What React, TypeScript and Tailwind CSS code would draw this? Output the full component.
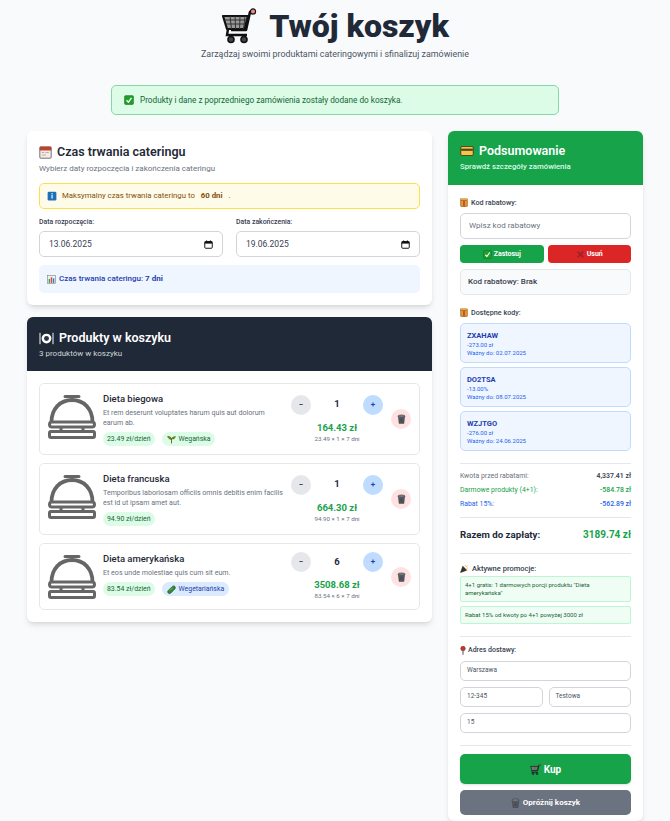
import React from 'react';

type IconProps = { className?: string };

const CartEmoji: React.FC<IconProps> = ({ className }) => (
  <svg viewBox="0 0 36 36" className={className}>
    <path d="M34 3 29 4 25 22H10" fill="none" stroke="#111" strokeWidth="2.6" strokeLinejoin="round" />
    <circle cx="32" cy="3.5" r="2.6" fill="#f28b82" stroke="#111" strokeWidth="1.2" />
    <path d="M2 8h25l-3.5 13H6z" fill="#9a9a9a" stroke="#111" strokeWidth="2.2" strokeLinejoin="round" />
    <path d="M4 12h21M5 16h19M9 8l1.5 13M14 8l.6 13M19 8l-.4 13M24 8l-1.4 13" stroke="#333" strokeWidth="1" />
    <path d="M7 21 6 27h20" fill="none" stroke="#111" strokeWidth="2.4" />
    <circle cx="10" cy="31.5" r="3" fill="#444" stroke="#111" strokeWidth="1.6" />
    <circle cx="23" cy="31.5" r="3" fill="#444" stroke="#111" strokeWidth="1.6" />
  </svg>
);

const CheckEmoji: React.FC<IconProps> = ({ className }) => (
  <svg viewBox="0 0 16 16" className={className}>
    <rect x="1" y="1" width="14" height="14" rx="1.5" fill="#22a02c" stroke="#166f1e" />
    <path d="M4 8.5 7 11.5 12 4.5" fill="none" stroke="#fff" strokeWidth="2" />
  </svg>
);

const CalendarEmoji: React.FC<IconProps> = ({ className }) => (
  <svg viewBox="0 0 16 16" className={className}>
    <rect x="1" y="1" width="14" height="14" rx="1" fill="#f2ece8" stroke="#555" />
    <rect x="1" y="1" width="14" height="4.5" fill="#c2402e" />
    <path d="M3.5 8h3M8 8h4M3.5 11h5" stroke="#c9a79c" strokeWidth="1.3" />
  </svg>
);

const InfoEmoji: React.FC<IconProps> = ({ className }) => (
  <svg viewBox="0 0 16 16" className={className}>
    <rect x="1" y="1" width="14" height="14" rx="2" fill="#1c6fb8" />
    <rect x="7" y="3.5" width="2.2" height="2" fill="#dbe9f6" />
    <rect x="7" y="6.5" width="2.2" height="5.5" fill="#dbe9f6" />
  </svg>
);

const ChartEmoji: React.FC<IconProps> = ({ className }) => (
  <svg viewBox="0 0 16 16" className={className}>
    <rect x="1" y="1" width="14" height="14" fill="#eef1f2" stroke="#777" />
    <rect x="3" y="7" width="2.6" height="7" fill="#3f9c4a" />
    <rect x="6.7" y="4" width="2.6" height="10" fill="#d2503e" />
    <rect x="10.4" y="6" width="2.6" height="8" fill="#2f7fc4" />
  </svg>
);

const PlateEmoji: React.FC<IconProps> = ({ className }) => (
  <svg viewBox="0 0 18 16" className={className}>
    <path d="M1 1v14M17 1v14" stroke="#fff" strokeWidth="1.2" />
    <circle cx="9" cy="8" r="6" fill="#fff" />
    <circle cx="9" cy="8" r="3" fill="#2a3442" />
  </svg>
);

const CardEmoji: React.FC<IconProps> = ({ className }) => (
  <svg viewBox="0 0 16 12" className={className}>
    <rect x="0.5" y="0.5" width="15" height="11" rx="1.6" fill="#f3c64a" stroke="#3b2f14" />
    <rect x="1" y="3.2" width="14" height="2.6" fill="#5a4414" />
  </svg>
);

const GiftEmoji: React.FC<IconProps> = ({ className }) => (
  <svg viewBox="0 0 14 16" className={className}>
    <rect x="1" y="4" width="12" height="11" rx="1" fill="#e39a2d" stroke="#8a4f12" />
    <rect x="5.6" y="4" width="2.8" height="11" fill="#c9402c" />
    <rect x="1" y="1.5" width="12" height="3" fill="#f0b040" stroke="#8a4f12" strokeWidth="0.8" />
  </svg>
);

const CrossEmoji: React.FC<IconProps> = ({ className }) => (
  <svg viewBox="0 0 16 16" className={className}>
    <path d="M3 3l10 10M13 3 3 13" stroke="#a3212a" strokeWidth="3.4" />
  </svg>
);

const TrashEmoji: React.FC<IconProps> = ({ className }) => (
  <svg viewBox="0 0 14 16" className={className}>
    <path d="M2 4h10l-1.2 11H3.2z" fill="#5c5f66" stroke="#33363b" strokeWidth="0.8" />
    <ellipse cx="7" cy="3.4" rx="5.8" ry="2" fill="#7a7d84" stroke="#33363b" strokeWidth="0.8" />
    <path d="M5 7v6M7 7v6M9 7v6" stroke="#393b40" strokeWidth="0.8" />
  </svg>
);

const HerbEmoji: React.FC<IconProps> = ({ className }) => (
  <svg viewBox="0 0 16 16" className={className}>
    <path d="M8 15V7" stroke="#6b5a1e" strokeWidth="1.6" />
    <path d="M8 8C5 8 2 6 1 2.5 5 2 8 4 8 8zM8 7c1-3 3.500-4.500 7-4.500C14.500 6 12 8 8 7z" fill="#6f8f1d" stroke="#3d5210" strokeWidth="0.7" />
  </svg>
);

const CucumberEmoji: React.FC<IconProps> = ({ className }) => (
  <svg viewBox="0 0 16 16" className={className}>
    <path d="M2 14c-1.500-1.500-1-3 .5-4.500L9 3c1.500-1.500 3.500-2 5-.5s1 3.500-.5 5L7 14c-1.500 1.500-3.500 1.500-5 0z" fill="#2f8a36" stroke="#14501a" />
    <path d="M5 10l5-5" stroke="#8fd08f" strokeWidth="1.2" />
  </svg>
);

const PartyEmoji: React.FC<IconProps> = ({ className }) => (
  <svg viewBox="0 0 16 16" className={className}>
    <path d="M1 15 5 4l7 7z" fill="#3b3324" stroke="#1d180f" />
    <path d="M9 2l1 2M13 3l-2 2M14 7l-2 .5" stroke="#e0a92e" strokeWidth="1.6" />
    <circle cx="12" cy="11" r="1.2" fill="#e0a92e" />
  </svg>
);

const PinEmoji: React.FC<IconProps> = ({ className }) => (
  <svg viewBox="0 0 10 16" className={className}>
    <circle cx="5" cy="4.500" r="4" fill="#c8372d" stroke="#7e1d17" />
    <path d="M5 8v7.500" stroke="#555" strokeWidth="1.8" />
  </svg>
);

const DateIcon: React.FC = () => (
  <svg viewBox="0 0 12 12" className="h-[9px] w-[9px] shrink-0">
    <rect x="1" y="2" width="10" height="9" rx="1.2" fill="none" stroke="#111" strokeWidth="1.3" />
    <rect x="1" y="2" width="10" height="2.800" fill="#111" />
    <path d="M3.500 0.500v2M8.500 0.500v2" stroke="#111" strokeWidth="1.2" />
  </svg>
);

const BellIcon: React.FC = () => (
  <svg viewBox="0 0 48 44" className="mt-[3px] h-[44px] w-[48px] shrink-0 self-start" fill="none" stroke="#666666">
    <path d="M17 1.500h14M24 1.500v4" strokeWidth="3" strokeLinecap="round" />
    <path d="M3.500 27C3.500 14 12 5 24 5s20.500 9 20.500 22" strokeWidth="3.800" />
    <rect x="1.500" y="27" width="45" height="5" rx="2.500" strokeWidth="3" />
    <path d="M13 32v5M35 32v5" strokeWidth="3" />
    <rect x="1.500" y="36.500" width="45" height="6" rx="1.500" strokeWidth="3" />
  </svg>
);

const ITEMS = [
  {
    name: 'Dieta biegowa',
    desc: 'Et rem deserunt voluptates harum quis aut dolorum earum ab.',
    descWidth: 'max-w-[168px]',
    perDay: '23.49 zł/dzień',
    qty: 1,
    total: '164.43 zł',
    calc: '23.49 × 1 × 7 dni',
    tag: 'vegan',
  },
  {
    name: 'Dieta francuska',
    desc: 'Temporibus laboriosam officiis omnis debitis enim facilis est id ut ipsam amet aut.',
    descWidth: 'max-w-[185px]',
    perDay: '94.90 zł/dzień',
    qty: 1,
    total: '664.30 zł',
    calc: '94.90 × 1 × 7 dni',
    tag: '',
  },
  {
    name: 'Dieta amerykańska',
    desc: 'Et eos unde molestiae quis cum sit eum.',
    descWidth: 'max-w-[185px]',
    perDay: '83.54 zł/dzień',
    qty: 6,
    total: '3508.68 zł',
    calc: '83.54 × 6 × 7 dni',
    tag: 'vege',
  },
];

const CODES = [
  { code: 'ZXAHAW', value: '-273.00 zł', until: 'Ważny do: 02.07.2025' },
  { code: 'DO2TSA', value: '-13.00%', until: 'Ważny do: 08.07.2025' },
  { code: 'WZJTGO', value: '-276.00 zł', until: 'Ważny do: 24.06.2025' },
];

const App: React.FC = () => {
  return (
    <div className="min-h-screen bg-[#f8fafc] px-[27px] pt-[8px] font-['Roboto',sans-serif] text-[#1f2937]">
      <div className="text-center">
        <h1 className="flex items-center justify-center gap-[12px] text-[32px] leading-[36px] font-black text-[#1f2937]">
          <CartEmoji className="h-[36px] w-[36px]" />
          Twój koszyk
        </h1>
        <p className="mt-[3px] text-[8.900px] leading-[14px] text-[#4b5563]">
          Zarządzaj swoimi produktami cateringowymi i sfinalizuj zamówienie
        </p>
      </div>

      <div className="mx-auto mt-[24px] flex h-[30px] w-[448px] items-center gap-[6px] rounded-[5px] border border-[#86d9a4] bg-[#dcfce7] px-[12px] text-[8.200px] text-[#166534]">
        <CheckEmoji className="h-[10px] w-[10px]" />
        Produkty i dane z poprzedniego zamówienia zostały dodane do koszyka.
      </div>

      <div className="mt-[16px] flex items-start gap-[16px]">
        <div className="flex w-[405px] shrink-0 flex-col gap-[12px]">
          <section className="rounded-[6px] bg-white p-[12px] shadow-md">
            <h2 className="flex items-center gap-[5px] text-[12.500px] leading-[18px] font-semibold text-[#1f2937]">
              <CalendarEmoji className="h-[13px] w-[13px]" />
              Czas trwania cateringu
            </h2>
            <p className="mt-[2px] text-[8px] leading-[12px] text-[#6b7280]">Wybierz daty rozpoczęcia i zakończenia cateringu</p>
            <div className="mt-[8px] flex h-[26px] items-center gap-[4px] rounded-[5px] border border-[#fde047] bg-[#fefce8] px-[7px] text-[7.800px] text-[#854d0e]">
              <InfoEmoji className="mr-[1px] h-[10px] w-[10px]" />
              Maksymalny czas trwania cateringu to
              <span className="font-bold">&nbsp;60 dni&nbsp;</span>
              .
            </div>
            <div className="mt-[8px] grid grid-cols-2 gap-[13px]">
              {['13.06.2025', '19.06.2025'].map((date, idx) => (
                <div key={date}>
                  <div className="text-[6.900px] leading-[11px] font-medium text-[#374151]">{idx === 0 ? 'Data rozpoczęcia:' : 'Data zakończenia:'}</div>
                  <div className="mt-[3px] flex h-[26px] items-center justify-between rounded-[5px] border border-[#d1d5db] bg-white px-[9px] text-[8.500px] text-[#374151]">
                    {date}
                    <DateIcon />
                  </div>
                </div>
              ))}
            </div>
            <div className="mt-[8px] flex h-[28px] items-center gap-[3px] rounded-[5px] bg-[#eff6ff] px-[8px] text-[8px] font-medium text-[#1e40af]">
              <ChartEmoji className="h-[9px] w-[9px]" />
              <span>
                Czas trwania cateringu: <b>7 dni</b>
              </span>
            </div>
          </section>

          <section className="overflow-hidden rounded-[6px] bg-white shadow-md">
            <div className="h-[54px] bg-[#1f2937] px-[12px] pt-[12px] text-white">
              <h2 className="flex items-center gap-[5px] text-[12.500px] leading-[18px] font-semibold">
                <PlateEmoji className="h-[13px] w-[15px]" />
                Produkty w koszyku
              </h2>
              <p className="mt-[1px] text-[8px] leading-[12px] text-[#d1d5db]">3 produktów w koszyku</p>
            </div>
            <div className="flex flex-col gap-[8px] p-[12px]">
              {ITEMS.map((item) => (
                <div key={item.name} className="flex items-center rounded-[5px] border border-[#e5e7eb] bg-white py-[8px] pr-[8px] pl-[8px]">
                  <BellIcon />
                  <div className="ml-[7px] w-[185px] shrink-0 self-start">
                    <div className="text-[9.500px] leading-[14px] font-medium text-[#1f2937]">{item.name}</div>
                    <p className={`mt-[2px] text-[7.100px] leading-[10px] text-[#6b7280] ${item.descWidth}`}>{item.desc}</p>
                    <div className="mt-[4px] flex gap-[7px]">
                      <span className="rounded-full bg-[#dcfce7] px-[4px] py-[2px] text-[6.900px] leading-[10px] text-[#166534]">{item.perDay}</span>
                      {item.tag === 'vegan' && (
                        <span className="flex items-center gap-[3px] rounded-full bg-[#dcfce7] px-[5px] py-[2px] text-[6.900px] leading-[10px] text-[#166534]">
                          <HerbEmoji className="h-[9px] w-[9px]" />
                          Wegańska
                        </span>
                      )}
                      {item.tag === 'vege' && (
                        <span className="flex items-center gap-[3px] rounded-full bg-[#dbeafe] px-[5px] py-[2px] text-[6.900px] leading-[10px] text-[#1e40af]">
                          <CucumberEmoji className="h-[9px] w-[9px]" />
                          Wegetariańska
                        </span>
                      )}
                    </div>
                  </div>
                  <div className="ml-[3px] flex w-[92px] shrink-0 flex-col items-center">
                    <div className="flex w-full items-center justify-between">
                      <button className="flex h-[20px] w-[20px] items-center justify-center rounded-full bg-[#e5e7eb] text-[8px] font-bold text-[#374151]">−</button>
                      <span className="text-[9.500px] font-bold text-[#1f2937]">{item.qty}</span>
                      <button className="flex h-[20px] w-[20px] items-center justify-center rounded-full bg-[#bfdbfe] text-[8px] font-bold text-[#1e40af]">+</button>
                    </div>
                    <div className="mt-[6px] text-[9.500px] leading-[14px] font-bold text-[#16a34a]">{item.total}</div>
                    <div className="text-[6.200px] leading-[9px] text-[#6b7280]">{item.calc}</div>
                  </div>
                  <button className="ml-[8px] flex h-[20px] w-[20px] shrink-0 items-center justify-center rounded-full bg-[#fee2e2]">
                    <TrashEmoji className="h-[10px] w-[9px]" />
                  </button>
                </div>
              ))}
            </div>
          </section>
        </div>

        <aside className="w-[195px] shrink-0 overflow-hidden rounded-[6px] bg-white shadow-md">
          <div className="h-[54px] bg-[#16a34a] px-[12px] pt-[11px] text-white">
            <h2 className="flex items-center gap-[5px] text-[12.500px] leading-[18px] font-semibold">
              <CardEmoji className="h-[10px] w-[14px]" />
              Podsumowanie
            </h2>
            <p className="mt-[1px] text-[7.800px] leading-[12px] font-medium text-[#dcfce7]">Sprawdź szczegóły zamówienia</p>
          </div>

          <div className="px-[12px] pt-[12px]">
            <div className="flex items-center gap-[3px] text-[7.200px] leading-[11px] font-medium text-[#374151]">
              <GiftEmoji className="h-[9px] w-[8px]" />
              Kod rabatowy:
            </div>
            <div className="mt-[5px] flex h-[26px] items-center rounded-[5px] border border-[#d1d5db] px-[8px] text-[8px] text-[#6b7280]">Wpisz kod rabatowy</div>
            <div className="mt-[6px] grid grid-cols-2 gap-[4px]">
              <button className="flex h-[18px] items-center justify-center gap-[2px] rounded-[4px] bg-[#16a34a] text-[7px] font-bold text-white">
                <CheckEmoji className="h-[9px] w-[9px]" />
                Zastosuj
              </button>
              <button className="flex h-[18px] items-center justify-center gap-[2px] rounded-[4px] bg-[#dc2626] text-[7px] font-bold text-white">
                <CrossEmoji className="h-[9px] w-[9px]" />
                Usuń
              </button>
            </div>
            <div className="mt-[6px] flex h-[26px] items-center rounded-[5px] border border-[#e5e7eb] bg-[#f9fafb] px-[7px] text-[8px] font-medium text-[#374151]">Kod rabatowy: Brak</div>

            <div className="mt-[12px] flex items-center gap-[3px] text-[7.200px] leading-[11px] font-medium text-[#374151]">
              <GiftEmoji className="h-[9px] w-[8px]" />
              Dostępne kody:
            </div>
            <div className="mt-[5px] flex flex-col gap-[4px]">
              {CODES.map((c) => (
                <div key={c.code} className="h-[40px] rounded-[5px] border border-[#bfdbfe] bg-[#eff6ff] px-[6px] pt-[6px]">
                  <div className="text-[7.500px] leading-[11px] font-bold text-[#1e40af]">{c.code}</div>
                  <div className="text-[6px] leading-[8px] text-[#2563eb]">{c.value}</div>
                  <div className="text-[6px] leading-[8px] text-[#2563eb]">{c.until}</div>
                </div>
              ))}
            </div>

            <hr className="mt-[12px] border-[#e5e7eb]" />

            <div className="mt-[8px] flex flex-col gap-[6px] text-[6.900px] leading-[8px]">
              <div className="flex justify-between text-[#6b7280]">
                <span>Kwota przed rabatami:</span>
                <span className="font-semibold text-[#374151]">4,337.41 zł</span>
              </div>
              <div className="flex justify-between text-[#16a34a]">
                <span>Darmowe produkty (4+1):</span>
                <span className="font-medium">-584.78 zł</span>
              </div>
              <div className="flex justify-between text-[#2563eb]">
                <span>Rabat 15%:</span>
                <span className="font-medium">-562.89 zł</span>
              </div>
            </div>

            <hr className="mt-[9px] border-[#e5e7eb]" />
            <div className="mt-[9px] flex items-center justify-between leading-[16px] font-bold">
              <span className="text-[9.700px] text-[#1f2937]">Razem do zapłaty:</span>
              <span className="text-[10px] text-[#16a34a]">3189.74 zł</span>
            </div>
            <hr className="mt-[10px] border-[#e5e7eb]" />

            <div className="mt-[9px] flex items-center gap-[3px] text-[7.500px] leading-[11px] font-medium text-[#374151]">
              <PartyEmoji className="h-[9px] w-[9px]" />
              Aktywne promocje:
            </div>
            <div className="mt-[2px] rounded-[2px] border border-[#bbf7d0] bg-[#f0fdf4] px-[4px] py-[4px] text-[6px] leading-[8px] text-[#166534]">4+1 gratis: 1 darmowych porcji produktu "Dieta amerykańska"</div>
            <div className="mt-[4px] rounded-[2px] border border-[#bbf7d0] bg-[#f0fdf4] px-[4px] py-[4px] text-[6px] leading-[8px] text-[#166534]">Rabat 15% od kwoty po 4+1 powyżej 3000 zł</div>

            <hr className="mt-[12px] border-[#e5e7eb]" />

            <div className="mt-[8px] flex items-center gap-[2px] text-[7px] leading-[11px] font-medium text-[#374151]">
              <PinEmoji className="h-[9px] w-[6px]" />
              Adres dostawy:
            </div>
            <div className="mt-[5px] flex h-[20px] items-center rounded-[5px] border border-[#d1d5db] px-[6px] text-[6.500px] text-[#4b5563]">Warszawa</div>
            <div className="mt-[6px] grid grid-cols-2 gap-[6px]">
              <div className="flex h-[20px] items-center rounded-[5px] border border-[#d1d5db] px-[6px] text-[6.500px] text-[#4b5563]">12-345</div>
              <div className="flex h-[20px] items-center rounded-[5px] border border-[#d1d5db] px-[6px] text-[6.500px] text-[#4b5563]">Testowa</div>
            </div>
            <div className="mt-[6px] flex h-[20px] items-center rounded-[5px] border border-[#d1d5db] px-[6px] text-[6.500px] text-[#4b5563]">15</div>

            <hr className="mt-[12px] border-[#e5e7eb]" />

            <button className="mt-[8px] flex h-[30px] w-full items-center justify-center gap-[3px] rounded-[5px] bg-[#16a34a] text-[10px] font-bold text-white shadow-sm">
              <CartEmoji className="h-[11px] w-[11px]" />
              Kup
            </button>
            <button className="mt-[6px] mb-[6px] flex h-[25px] w-full items-center justify-center gap-[3px] rounded-[5px] bg-[#6b7280] text-[8px] font-bold text-white">
              <TrashEmoji className="h-[10px] w-[9px]" />
              Opróżnij koszyk
            </button>
          </div>
        </aside>
      </div>
    </div>
  );
};

export default App;
